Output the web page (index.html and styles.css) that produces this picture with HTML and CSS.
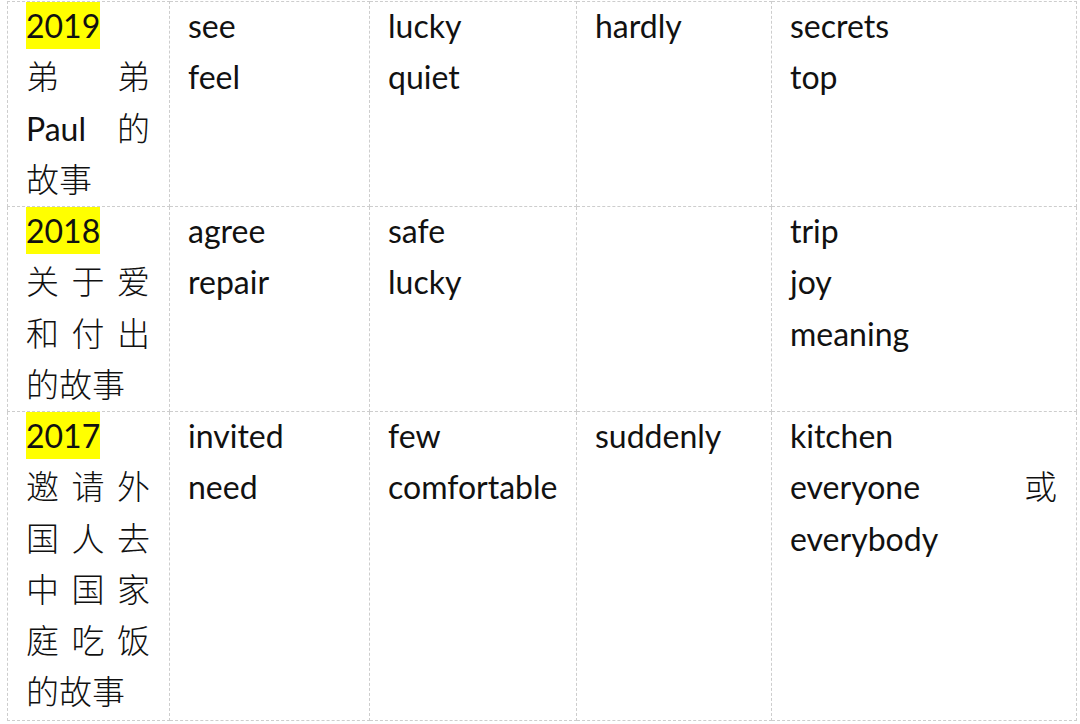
FILE: index.html
```html
<!DOCTYPE html>
<html lang="zh">
<head>
<meta charset="utf-8">
<title>Vocabulary table</title>
<link rel="stylesheet" href="styles.css">
</head>
<body>
<table class="vocab">
  <colgroup>
    <col class="c1"><col class="c2"><col class="c3"><col class="c4"><col class="c5">
  </colgroup>
  <tbody>
    <tr class="r4">
      <td><div class="cell"><div><span class="year">2019</span></div><p class="cjk-just"><span class="cjk">弟弟</span>Paul<span class="cjk">的故事</span></p></div></td>
      <td><div class="cell"><p>see</p><p>feel</p></div></td>
      <td><div class="cell"><p>lucky</p><p>quiet</p></div></td>
      <td><div class="cell"><p>hardly</p></div></td>
      <td><div class="cell"><p>secrets</p><p>top</p></div></td>
    </tr>
    <tr class="r4">
      <td><div class="cell"><div><span class="year">2018</span></div><p class="cjk-just"><span class="cjk">关于爱和付出的故事</span></p></div></td>
      <td><div class="cell"><p>agree</p><p>repair</p></div></td>
      <td><div class="cell"><p>safe</p><p>lucky</p></div></td>
      <td></td>
      <td><div class="cell"><p>trip</p><p>joy</p><p>meaning</p></div></td>
    </tr>
    <tr class="r6">
      <td><div class="cell"><div><span class="year">2017</span></div><p class="cjk-just"><span class="cjk">邀请外国人去中国家庭吃饭的故事</span></p></div></td>
      <td><div class="cell"><p>invited</p><p>need</p></div></td>
      <td><div class="cell"><p>few</p><p>comfortable</p></div></td>
      <td><div class="cell"><p>suddenly</p></div></td>
      <td><div class="cell"><p>kitchen</p><p class="cjk-just">everyone <span class="cjk">或</span> everybody</p></div></td>
    </tr>
  </tbody>
</table>
</body>
</html>
```
FILE: styles.css
```css
html, body {
  margin: 0;
  padding: 0;
  background: #ffffff;
}
body {
  font-family: Lato, "Noto Sans CJK SC", sans-serif;
  font-size: 32px;
  color: #111111;
}
.vocab {
  border-collapse: collapse;
  table-layout: fixed;
  width: 1070px;
  margin: 1px 0 0 7px;
}
.c1 { width: 162px; }
.c2 { width: 200px; }
.c3 { width: 207px; }
.c4 { width: 195px; }
.c5 { width: 305px; }
.vocab td {
  border: 1px dashed #cdcdcd;
  vertical-align: top;
  padding: 0 19px 0 18px;
  line-height: 51.3px;
  overflow: hidden;
}
.r4 td { height: 204px; }
.r6 td { height: 308px; }
.cell { margin-top: -2px; }
.vocab p { margin: 0; }
.year {
  background: #ffff00;
  padding: 6px 0 4px;
}
.cjk {
  font-family: "Noto Sans CJK SC", sans-serif;
  font-size: 33px;
  font-weight: 300;
  line-height: 36px;
}
.cjk-just {
  text-align: justify;
}
```
